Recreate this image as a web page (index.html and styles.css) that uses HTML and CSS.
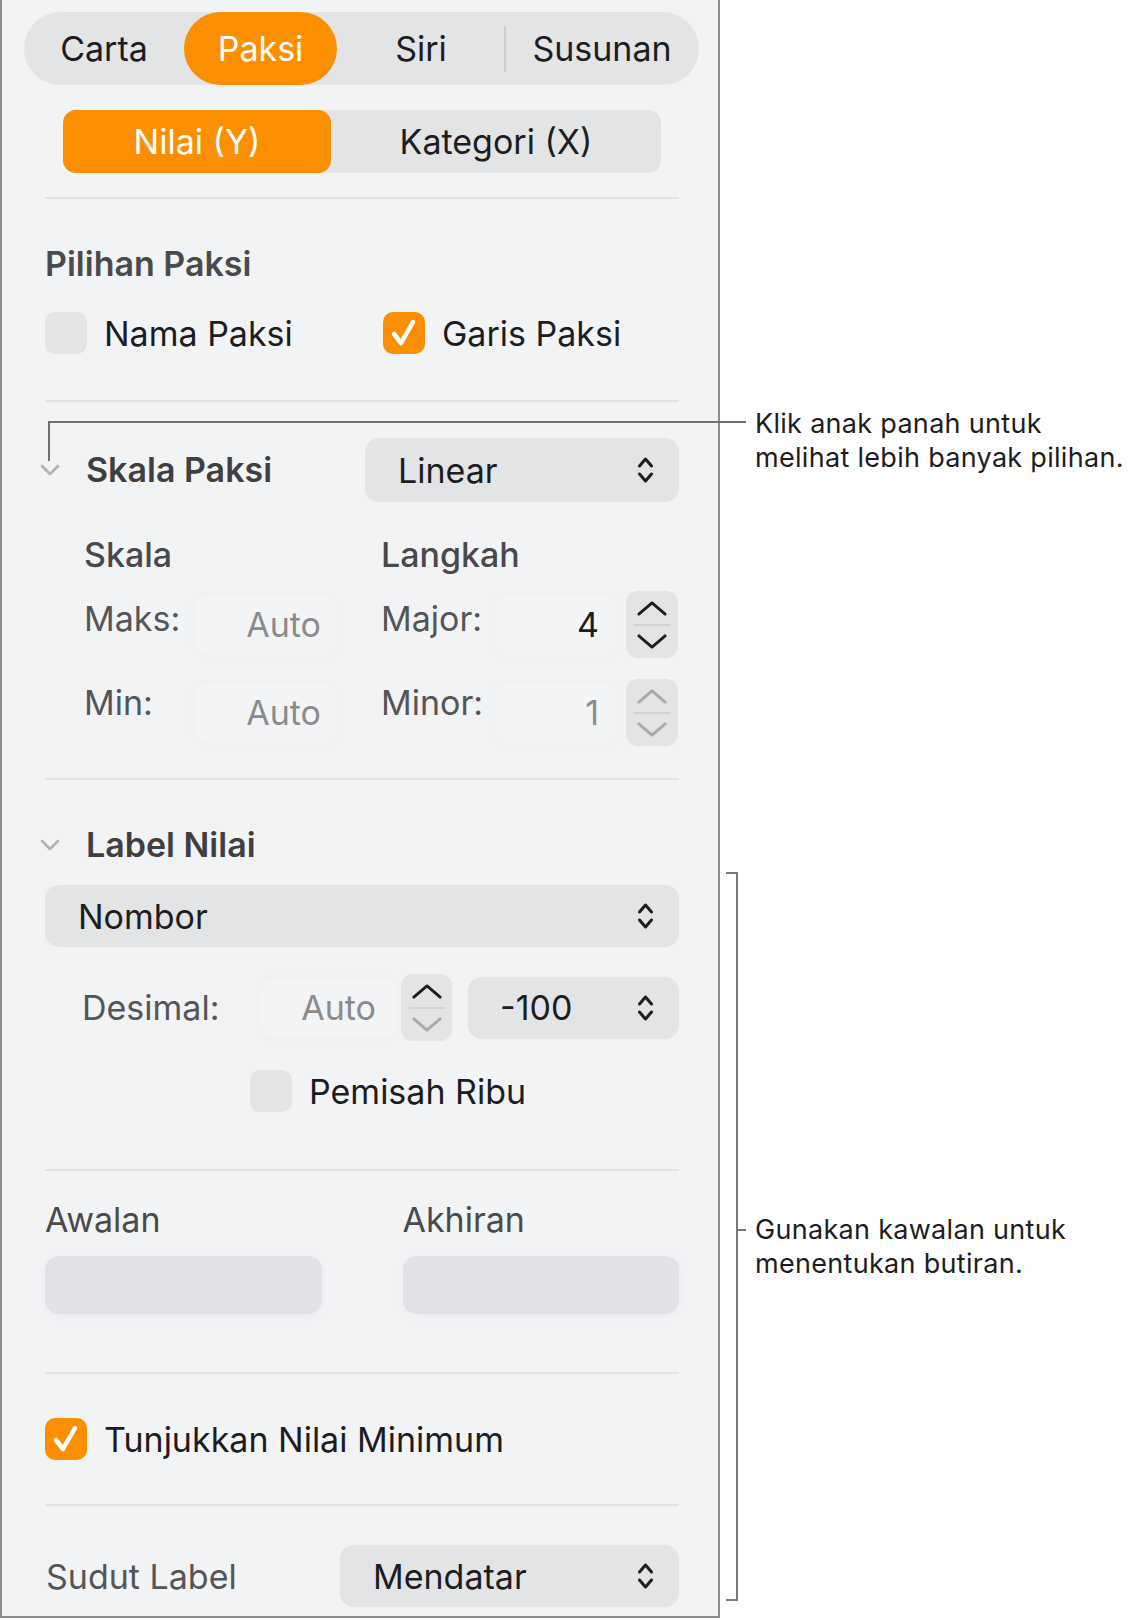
FILE: index.html
```html
<!DOCTYPE html>
<html lang="ms">
<head>
  <meta charset="UTF-8">
  <title>Paksi - Format</title>
  <meta name="viewport" content="width=device-width, initial-scale=1.0">
  <link rel="stylesheet" href="styles.css">
</head>
<body>
  <div class="page">
    <div class="panel">
      <div class="tabs">
        <span class="tab">Carta</span>
        <span class="tab on">Paksi</span>
        <span class="tab">Siri</span>
        <span class="tab-sep"></span>
        <span class="tab">Susunan</span>
      </div>

      <div class="subtabs">
        <span class="subtab on">Nilai (Y)</span>
        <span class="subtab">Kategori (X)</span>
      </div>

      <div class="divider d1"></div>

      <h3 class="group-title">Pilihan Paksi</h3>
      <div class="check-grid">
        <label class="check-item">
          <span class="box"></span>
          <span>Nama Paksi</span>
        </label>
        <label class="check-item">
          <span class="box checked">
            <svg viewBox="0 0 42 42"><path d="M11 22 L18 31 L30 10"/></svg>
          </span>
          <span>Garis Paksi</span>
        </label>
      </div>

      <div class="divider d2"></div>

      <div class="section-head skala-head">
        <svg class="disclose" viewBox="0 0 22 14"><path d="M3 3 L11 11 L19 3"/></svg>
        <span class="section-title">Skala Paksi</span>
        <div class="popup popup-linear">
          <span>Linear</span>
          <svg class="updown" viewBox="0 0 18 28"><path d="M3 10 L9 3 L15 10 M3 18 L9 25 L15 18"/></svg>
        </div>
      </div>

      <div class="scale-grid">
        <div class="subhead">Skala</div>
        <div class="subhead">Langkah</div>

        <div class="field-row row1">
          <span class="field-label">Maks:</span>
          <span class="soft-field wide">Auto</span>
        </div>
        <div class="field-row row1">
          <span class="field-label step-label">Major:</span>
          <span class="soft-field num dark">4</span>
          <span class="stepper">
            <svg viewBox="0 0 34 18"><path d="M3 15 L17 3 L31 15"/></svg>
            <i class="stepper-line"></i>
            <svg viewBox="0 0 34 18"><path d="M3 3 L17 15 L31 3"/></svg>
          </span>
        </div>

        <div class="field-row row2">
          <span class="field-label">Min:</span>
          <span class="soft-field wide">Auto</span>
        </div>
        <div class="field-row row2">
          <span class="field-label step-label">Minor:</span>
          <span class="soft-field num">1</span>
          <span class="stepper off">
            <svg viewBox="0 0 34 18"><path d="M3 15 L17 3 L31 15"/></svg>
            <i class="stepper-line"></i>
            <svg viewBox="0 0 34 18"><path d="M3 3 L17 15 L31 3"/></svg>
          </span>
        </div>
      </div>

      <div class="divider d3"></div>

      <div class="section-head label-head">
        <svg class="disclose" viewBox="0 0 22 14"><path d="M3 3 L11 11 L19 3"/></svg>
        <span class="section-title">Label Nilai</span>
      </div>

      <div class="popup popup-full">
        <span>Nombor</span>
        <svg class="updown" viewBox="0 0 18 28"><path d="M3 10 L9 3 L15 10 M3 18 L9 25 L15 18"/></svg>
      </div>

      <div class="decimal-row">
        <span class="field-label dec-label">Desimal:</span>
        <span class="soft-field dec-field">Auto</span>
        <span class="stepper half-off">
          <svg viewBox="0 0 34 18"><path d="M3 15 L17 3 L31 15"/></svg>
          <i class="stepper-line"></i>
          <svg class="dim" viewBox="0 0 34 18"><path d="M3 3 L17 15 L31 3"/></svg>
        </span>
        <div class="popup popup-dec">
          <span>-100</span>
          <svg class="updown" viewBox="0 0 18 28"><path d="M3 10 L9 3 L15 10 M3 18 L9 25 L15 18"/></svg>
        </div>
      </div>

      <label class="check-item thousands">
        <span class="box"></span>
        <span>Pemisah Ribu</span>
      </label>

      <div class="divider d4"></div>

      <div class="affix-grid">
        <span class="affix-label">Awalan</span>
        <span class="affix-label">Akhiran</span>
        <span class="affix-field"></span>
        <span class="affix-field"></span>
      </div>

      <div class="divider d5"></div>

      <label class="check-item minimum">
        <span class="box checked">
          <svg viewBox="0 0 42 42"><path d="M11 22 L18 31 L30 10"/></svg>
        </span>
        <span>Tunjukkan Nilai Minimum</span>
      </label>

      <div class="divider d6"></div>

      <div class="angle-row">
        <span class="angle-label">Sudut Label</span>
        <div class="popup popup-angle">
          <span>Mendatar</span>
          <svg class="updown" viewBox="0 0 18 28"><path d="M3 10 L9 3 L15 10 M3 18 L9 25 L15 18"/></svg>
        </div>
      </div>
    </div>

    <!-- callouts -->
    <div class="leader-h"></div>
    <div class="leader-v"></div>
    <p class="note note-top">Klik anak panah untuk<br>melihat lebih banyak pilihan.</p>

    <div class="bracket"></div>
    <div class="bracket-tick"></div>
    <p class="note note-bottom">Gunakan kawalan untuk<br>menentukan butiran.</p>
  </div>
</body>
</html>
```

FILE: styles.css
```css
* {
  box-sizing: border-box;
}

body {
  margin: 0;
  background: #fff;
  font-family: Inter, "Noto Sans", sans-serif;
  color: #1d1d1f;
}

.page {
  position: relative;
  width: 1131px;
  height: 1620px;
}

.panel {
  width: 720px;
  background: #f2f3f5;
  border-left: 2px solid #8e8e90;
  border-right: 2px solid #8e8e90;
  border-bottom: 2px solid #8e8e90;
  padding: 12px 39px 9px 43px;
  font-size: 34px;
}

/* top tabs */
.tabs {
  display: grid;
  grid-template-columns: 160px 153px 168px 0 194px;
  height: 73px;
  margin: 0 -20px 0 -21px;
  background: #e3e4e6;
  border-radius: 37px;
}

.tab {
  display: flex;
  align-items: center;
  justify-content: center;
  border-radius: 37px;
}

.tab.on {
  background: #fb8f00;
  color: #fff;
}

.tab-sep {
  align-self: center;
  width: 2px;
  height: 46px;
  margin-left: -1px;
  background: #cbccce;
}

.subtabs {
  display: grid;
  grid-template-columns: 268px 330px;
  height: 63px;
  margin: 25px 18px 0;
  background: #e3e4e6;
  border-radius: 13px;
}

.subtab {
  display: flex;
  align-items: center;
  justify-content: center;
  border-radius: 13px;
}

.subtab.on {
  background: #fb8f00;
  color: #fff;
}

.divider {
  height: 2px;
  background: #e1e2e4;
}

.d1 { margin-top: 24px; }
.d2 { margin-top: 46px; }
.d3 { margin-top: 32px; }
.d4 { margin-top: 57px; }
.d5 { margin-top: 58px; }
.d6 { margin-top: 44px; }

.group-title {
  margin: 45px 0 0;
  font-size: 34px;
  line-height: 40px;
  font-weight: 600;
  color: #4a4a4c;
}

/* checkboxes */
.check-grid {
  display: grid;
  grid-template-columns: 338px 1fr;
  margin-top: 28px;
}

.check-item {
  display: flex;
  align-items: center;
  gap: 17px;
  height: 42px;
}

.box {
  width: 42px;
  height: 42px;
  flex: none;
  border-radius: 10px;
  background: #e3e4e6;
}

.box.checked {
  background: #fb8f00;
}

.box svg {
  display: block;
  width: 42px;
  height: 42px;
  fill: none;
  stroke: #fff;
  stroke-width: 4.5;
  stroke-linecap: round;
  stroke-linejoin: round;
}

.thousands {
  margin-top: 29px;
  padding-left: 205px;
}

.minimum {
  margin-top: 44px;
}

/* collapsible sections */
.section-head {
  display: flex;
  align-items: center;
}

.skala-head {
  margin-top: 36px;
  height: 64px;
}

.label-head {
  margin-top: 45px;
  height: 40px;
}

.disclose {
  width: 22px;
  height: 14px;
  margin: 0 25px 0 -6px;
  fill: none;
  stroke: #b2b2b4;
  stroke-width: 2.6;
  stroke-linecap: round;
  stroke-linejoin: round;
}

.section-title {
  flex: 1;
  font-weight: 600;
  color: #3f3f41;
  line-height: 40px;
}

/* pop-up buttons */
.popup {
  display: flex;
  align-items: center;
  justify-content: space-between;
  background: #e3e4e6;
  border-radius: 14px;
  padding: 0 24px 0 33px;
}

.updown {
  width: 19px;
  height: 28px;
  fill: none;
  stroke: #1d1d1f;
  stroke-width: 3;
  stroke-linecap: round;
  stroke-linejoin: round;
}

.popup-linear {
  width: 314px;
  height: 64px;
}

.popup-full {
  margin-top: 20px;
  height: 62px;
}

.popup-dec {
  width: 211px;
  height: 62px;
  margin-left: 16px;
  padding-left: 32px;
}

.popup-angle {
  width: 339px;
  height: 62px;
}

/* scale block */
.scale-grid {
  display: grid;
  grid-template-columns: 297px 1fr;
  padding-left: 39px;
}

.subhead {
  margin-top: 33px;
  line-height: 40px;
  font-weight: 500;
  color: #49494b;
}

.field-row {
  display: flex;
  align-items: center;
  height: 67px;
}

.row1 { margin-top: 16px; }
.row2 { margin-top: 21px; }

.field-label {
  width: 110px;
  padding-bottom: 12px;
  color: #555557;
}

.row2 .field-label {
  padding-bottom: 20px;
}

.step-label {
  width: 114px;
}

.soft-field {
  height: 60px;
  display: flex;
  align-items: center;
  justify-content: flex-end;
  border-radius: 14px;
  background: #f3f4f6;
  box-shadow: 0 0 6px rgba(0, 0, 0, 0.025);
  color: #8b8b8d;
}

.soft-field.wide {
  width: 142px;
  padding-right: 15px;
}

.soft-field.num {
  width: 122px;
  padding-right: 18px;
}

.soft-field.dark {
  color: #1d1d1f;
}

.stepper {
  width: 52px;
  height: 67px;
  margin-left: 9px;
  display: flex;
  flex-direction: column;
  align-items: center;
  justify-content: center;
  gap: 7px;
  border-radius: 12px;
  background: #e3e4e6;
}

.stepper svg {
  width: 32px;
  height: 17px;
  fill: none;
  stroke: #1d1d1f;
  stroke-width: 3;
  stroke-linecap: round;
  stroke-linejoin: round;
}

.stepper-line {
  width: 36px;
  height: 2px;
  background: #d2d3d5;
}

.stepper.off svg,
.stepper svg.dim {
  stroke: #a9a9ab;
}

/* decimal row */
.decimal-row {
  display: flex;
  align-items: center;
  height: 67px;
  margin-top: 27px;
  padding-left: 37px;
}

.dec-label {
  width: 178px;
  padding-bottom: 0;
}

.dec-field {
  width: 138px;
  padding-right: 22px;
}

.half-off {
  margin-left: 3px;
  width: 51px;
}

/* prefix / suffix */
.affix-grid {
  display: grid;
  grid-template-columns: 1fr 1fr;
  column-gap: 81px;
  margin-top: 29px;
}

.affix-label {
  line-height: 40px;
  color: #4a4a4c;
}

.affix-field {
  height: 58px;
  margin-top: 16px;
  border-radius: 14px;
  background: #e1e2e5;
  box-shadow: 0 2px 8px rgba(0, 0, 0, 0.03);
}

.angle-row {
  display: flex;
  align-items: center;
  justify-content: space-between;
  margin-top: 39px;
}

.angle-label {
  padding-left: 1px;
  color: #555557;
}

/* callouts */
.leader-h {
  position: absolute;
  left: 48px;
  top: 421px;
  width: 698px;
  height: 2px;
  background: #707072;
}

.leader-v {
  position: absolute;
  left: 48px;
  top: 421px;
  width: 2px;
  height: 40px;
  background: #707072;
}

.note {
  position: absolute;
  left: 755px;
  margin: 0;
  font-size: 27px;
  line-height: 34px;
  letter-spacing: 0.3px;
  color: #1d1d1f;
}

.note-top {
  top: 407px;
}

.note-bottom {
  top: 1213px;
}

.bracket {
  position: absolute;
  left: 726px;
  top: 872px;
  width: 12px;
  height: 729px;
  border: 2px solid #7a7a7c;
  border-left: none;
}

.bracket-tick {
  position: absolute;
  left: 737px;
  top: 1229px;
  width: 9px;
  height: 2px;
  background: #7a7a7c;
}
```
